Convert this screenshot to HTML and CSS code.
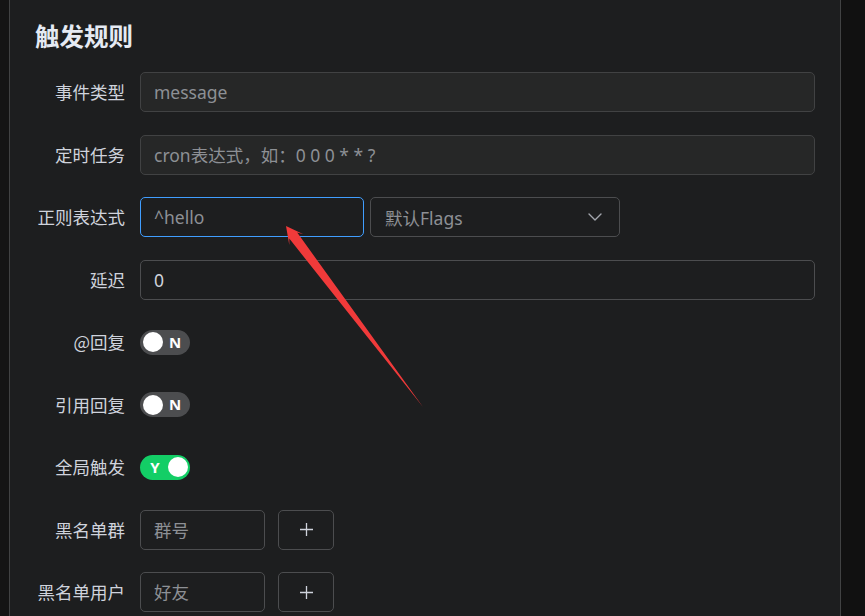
FILE: index.html
```html
<!DOCTYPE html>
<html lang="zh-CN">
<head>
<meta charset="utf-8">
<title>触发规则</title>
<link rel="stylesheet" href="styles.css">
</head>
<body>
<div class="page">
  <div class="gutter"></div>
  <section class="panel">
    <h2 class="title">触发规则</h2>
    <form class="form">
      <div class="row">
        <label class="label">事件类型</label>
        <div class="control"><input class="input" disabled placeholder="message"></div>
      </div>
      <div class="row">
        <label class="label">定时任务</label>
        <div class="control"><input class="input" disabled placeholder="cron表达式，如：0 0 0 * * ?"></div>
      </div>
      <div class="row">
        <label class="label">正则表达式</label>
        <div class="control gap-sm">
          <input class="input focus w-regex" placeholder="^hello">
          <div class="select">
            <span class="select-text">默认Flags</span>
            <svg class="chev" width="14" height="8" viewBox="0 0 14 8"><path d="M1 1l6 6 6-6" fill="none" stroke="#a3a6ad" stroke-width="1.4" stroke-linecap="round" stroke-linejoin="round"/></svg>
          </div>
        </div>
      </div>
      <div class="row">
        <label class="label">延迟</label>
        <div class="control"><input class="input" value="0"></div>
      </div>
      <div class="row">
        <label class="label">@回复</label>
        <div class="control"><div class="switch"><span class="knob"></span><span class="sw-text">N</span></div></div>
      </div>
      <div class="row">
        <label class="label">引用回复</label>
        <div class="control"><div class="switch"><span class="knob"></span><span class="sw-text">N</span></div></div>
      </div>
      <div class="row">
        <label class="label">全局触发</label>
        <div class="control"><div class="switch on"><span class="sw-text">Y</span><span class="knob"></span></div></div>
      </div>
      <div class="row">
        <label class="label">黑名单群</label>
        <div class="control gap-md">
          <input class="input w-small" placeholder="群号">
          <button type="button" class="btn"><svg width="15" height="15" viewBox="0 0 15 15"><path d="M7.5 1v13M1 7.5h13" stroke="#cfd3dc" stroke-width="1.3"/></svg></button>
        </div>
      </div>
      <div class="row">
        <label class="label">黑名单用户</label>
        <div class="control gap-md">
          <input class="input w-small" placeholder="好友">
          <button type="button" class="btn"><svg width="15" height="15" viewBox="0 0 15 15"><path d="M7.5 1v13M1 7.5h13" stroke="#cfd3dc" stroke-width="1.3"/></svg></button>
        </div>
      </div>
    </form>
  </section>
  <div class="side"></div>
</div>
<svg class="annot" width="865" height="616" viewBox="0 0 865 616">
  <polygon points="286,226 303.4,234.2 297.2,232.6 423,407 289.3,238.6 289.3,245" fill="#f03a3a"/>
</svg>
</body>
</html>
```
FILE: styles.css
```css
html, body {
  margin: 0;
  height: 100%;
  overflow: hidden;
  background: #141414;
}
body {
  font-family: "Noto Sans", "Noto Sans CJK SC", sans-serif;
  position: relative;
}
.page {
  display: flex;
  height: 616px;
}
.gutter {
  width: 9px;
  flex: none;
  background: #141414;
}
.panel {
  flex: none;
  width: 780px;
  padding: 20px 25px 0;
  background: #1d1e1f;
  border-left: 1px solid #414243;
  border-right: 1px solid #414243;
}
.side {
  flex: 1;
  background: #111111;
}
.title {
  margin: 0 0 20px;
  font-size: 24.5px;
  line-height: 32px;
  font-weight: 700;
  color: #e5eaf3;
  font-family: "Noto Sans CJK SC", sans-serif;
}
.form {
  margin: 0;
}
.row {
  display: grid;
  grid-template-columns: 105px 1fr;
  height: 40px;
  margin-bottom: 22.5px;
  align-items: center;
}
.label {
  text-align: right;
  padding-right: 15px;
  font-size: 17.5px;
  line-height: 40px;
  color: #cfd3dc;
  white-space: nowrap;
  font-family: "Noto Sans CJK SC", sans-serif;
}
.control {
  display: flex;
  align-items: center;
  height: 40px;
}
.gap-sm { gap: 6px; }
.gap-md { gap: 13px; }
.input {
  box-sizing: border-box;
  width: 100%;
  height: 40px;
  margin: 0;
  padding: 0 13px;
  border: 1px solid #4c4d4f;
  border-radius: 5px;
  background: transparent;
  color: #cfd3dc;
  font-family: "Noto Sans", "Noto Sans CJK SC", sans-serif;
  font-size: 17.5px;
  outline: none;
}
.input::placeholder {
  color: #8d9095;
  opacity: 1;
}
.input:disabled {
  background: #262727;
  border-color: #414243;
}
.input.focus {
  border-color: #409eff;
}
.w-regex {
  width: 224px;
  flex: none;
}
.w-small {
  width: 125px;
  flex: none;
}
.select {
  box-sizing: border-box;
  width: 250px;
  height: 40px;
  flex: none;
  display: flex;
  align-items: center;
  justify-content: space-between;
  padding: 0 17px 0 14px;
  border: 1px solid #4c4d4f;
  border-radius: 5px;
}
.select-text {
  font-size: 17.5px;
  color: #8d9095;
}
.chev {
  display: block;
}
.switch {
  box-sizing: border-box;
  width: 50px;
  height: 25px;
  border-radius: 12.5px;
  background: #4c4d4f;
  display: flex;
  align-items: center;
  padding: 0 2.5px;
}
.switch.on {
  background: #13ce66;
}
.knob {
  width: 20px;
  height: 20px;
  border-radius: 50%;
  background: #ffffff;
  flex: none;
}
.sw-text {
  flex: 1;
  text-align: center;
  color: #ffffff;
  font-weight: 700;
  font-size: 15px;
  line-height: 25px;
  font-family: "Noto Sans", sans-serif;
}
.btn {
  box-sizing: border-box;
  width: 56px;
  height: 40px;
  flex: none;
  margin: 0;
  padding: 0;
  border: 1px solid #4c4d4f;
  border-radius: 5px;
  background: transparent;
  display: flex;
  align-items: center;
  justify-content: center;
}
.btn svg {
  display: block;
}
.annot {
  position: absolute;
  left: 0;
  top: 0;
  pointer-events: none;
}
```
